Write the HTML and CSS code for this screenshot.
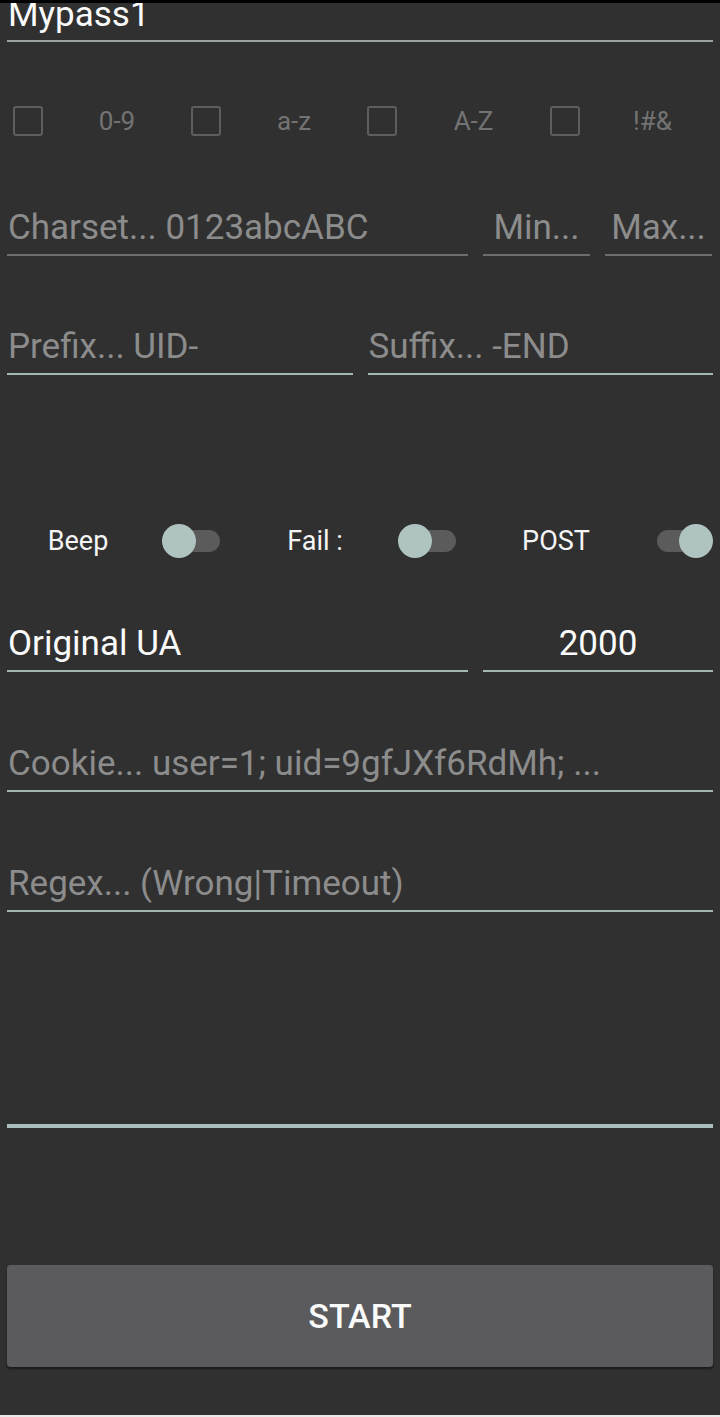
FILE: index.html
```html
<!DOCTYPE html>
<html lang="en">
<head>
<meta charset="utf-8">
<title>Brute form</title>
<link rel="stylesheet" href="styles.css">
</head>
<body>
<div class="statusbar"></div>
<main class="screen">
  <div class="field field--first field--value">Mypass1</div>

  <div class="checks">
    <div class="check"><span class="box"></span><span class="check-label">0-9</span></div>
    <div class="check"><span class="box"></span><span class="check-label">a-z</span></div>
    <div class="check"><span class="box"></span><span class="check-label">A-Z</span></div>
    <div class="check check--last"><span class="box"></span><span class="check-label">!#&amp;</span></div>
  </div>

  <div class="row row--charset">
    <div class="field field--hint field--dim field--charset">Charset... 0123abcABC</div>
    <div class="field field--hint field--dim field--small">Min...</div>
    <div class="field field--hint field--dim field--small">Max...</div>
  </div>

  <div class="row row--affix">
    <div class="field field--hint field--half">Prefix... UID-</div>
    <div class="field field--hint field--half">Suffix... -END</div>
  </div>

  <div class="switches">
    <div class="sw-group sw-group--1">
      <span class="sw-label sw-label--1">Beep</span>
      <span class="switch"><span class="track"></span><span class="thumb"></span></span>
    </div>
    <div class="sw-group sw-group--2">
      <span class="sw-label sw-label--2">Fail :</span>
      <span class="switch"><span class="track"></span><span class="thumb"></span></span>
    </div>
    <div class="sw-group sw-group--3">
      <span class="sw-label sw-label--3">POST</span>
      <span class="switch switch--on"><span class="track"></span><span class="thumb"></span></span>
    </div>
  </div>

  <div class="row row--ua">
    <div class="field field--value field--ua">Original UA</div>
    <div class="field field--value field--delay">2000</div>
  </div>

  <div class="field field--hint field--cookie">Cookie... user=1; uid=9gfJXf6RdMh; ...</div>

  <div class="field field--hint field--regex">Regex... (Wrong|Timeout)</div>

  <div class="bigline"></div>

  <button class="start" type="button">START</button>
</main>
<div class="bottomedge"></div>
</body>
</html>
```

FILE: styles.css
```css
* { box-sizing: border-box; }

html, body {
  margin: 0;
  padding: 0;
  background: #303030;
}

body {
  position: relative;
  width: 720px;
  height: 1417px;
  overflow: hidden;
  font-family: Roboto, "Liberation Sans", sans-serif;
}

.statusbar {
  position: absolute;
  top: 0;
  left: 0;
  right: 0;
  height: 3px;
  background: #000;
  z-index: 2;
}

.bottomedge {
  position: absolute;
  left: 0;
  right: 0;
  bottom: 0;
  height: 2px;
  background: #e8e8e8;
}

.screen {
  display: flex;
  flex-direction: column;
  padding: 0 7px;
}

/* text fields */
.field {
  font-size: 35px;
  line-height: 36px;
  padding-bottom: 8px;
  border-bottom: 2px solid #a3b8b5;
  white-space: nowrap;
}

.field--value { color: #fafafa; padding-left: 1px; }
.field--hint { color: #8c8c8c; padding-left: 1px; }
.field--dim { border-bottom-color: #6d6d6d; }

.field--first {
  line-height: 30px;
  padding-bottom: 10px;
  border-bottom-color: #9da3a2;
}

/* checkboxes */
.checks {
  display: grid;
  grid-template-columns: 178px 176px 183px 1fr;
  margin-top: 64px;
  padding-left: 6px;
  height: 30px;
}

.check {
  display: flex;
  align-items: center;
}

.box {
  flex: 0 0 30px;
  width: 30px;
  height: 30px;
  border: 2px solid #5e5e5e;
  border-radius: 3px;
}

.check-label {
  flex: 1;
  text-align: center;
  font-size: 26px;
  color: #737373;
}

.check--last .check-label { padding-left: 12px; }

/* rows */
.row {
  display: flex;
  gap: 15px;
}

.row--charset { margin-top: 74px; }
.field--charset { flex: 0 0 461px; }
.field--small { flex: 0 0 107px; text-align: center; padding-left: 0; }

.row--affix { margin-top: 73px; }
.field--half { flex: 1; }

/* switches */
.switches {
  display: flex;
  margin-top: 149px;
  height: 34px;
  align-items: center;
}

.sw-group {
  display: flex;
  align-items: center;
  gap: 13px;
}

.sw-group--2 { margin-left: 25px; }
.sw-group--3 { margin-left: 14px; }

.sw-label {
  font-size: 27px;
  color: #f5f5f5;
  text-align: center;
}

.sw-label--1 { width: 142px; }
.sw-label--2 { width: 140px; }
.sw-label--3 { width: 172px; }

.switch {
  position: relative;
  display: block;
  width: 58px;
  height: 34px;
}

.track {
  position: absolute;
  top: 6px;
  left: 16px;
  right: 0;
  height: 22px;
  border-radius: 11px;
  background: #5b5b5b;
}

.thumb {
  position: absolute;
  top: 0;
  left: 0;
  width: 34px;
  height: 34px;
  border-radius: 50%;
  background: #afc3c0;
}

.switch--on .track { left: 2px; right: 14px; }
.switch--on .thumb { left: auto; right: 0; }

/* UA row */
.row--ua { margin-top: 68px; }
.field--ua { flex: 2; }
.field--delay { flex: 1; text-align: center; padding-left: 0; }

.field--cookie { margin-top: 74px; }
.field--regex { margin-top: 74px; }

.bigline {
  margin-top: 212px;
  height: 4px;
  background: #a9bfbc;
}

.start {
  margin-top: 137px;
  height: 102px;
  width: 100%;
  border: none;
  border-radius: 4px;
  background: #5b5b5d;
  color: #fafafa;
  font-family: Roboto, "Liberation Sans", sans-serif;
  font-size: 34px;
  font-weight: 500;
  box-shadow: 0 2px 2px rgba(0, 0, 0, 0.45);
}
```
